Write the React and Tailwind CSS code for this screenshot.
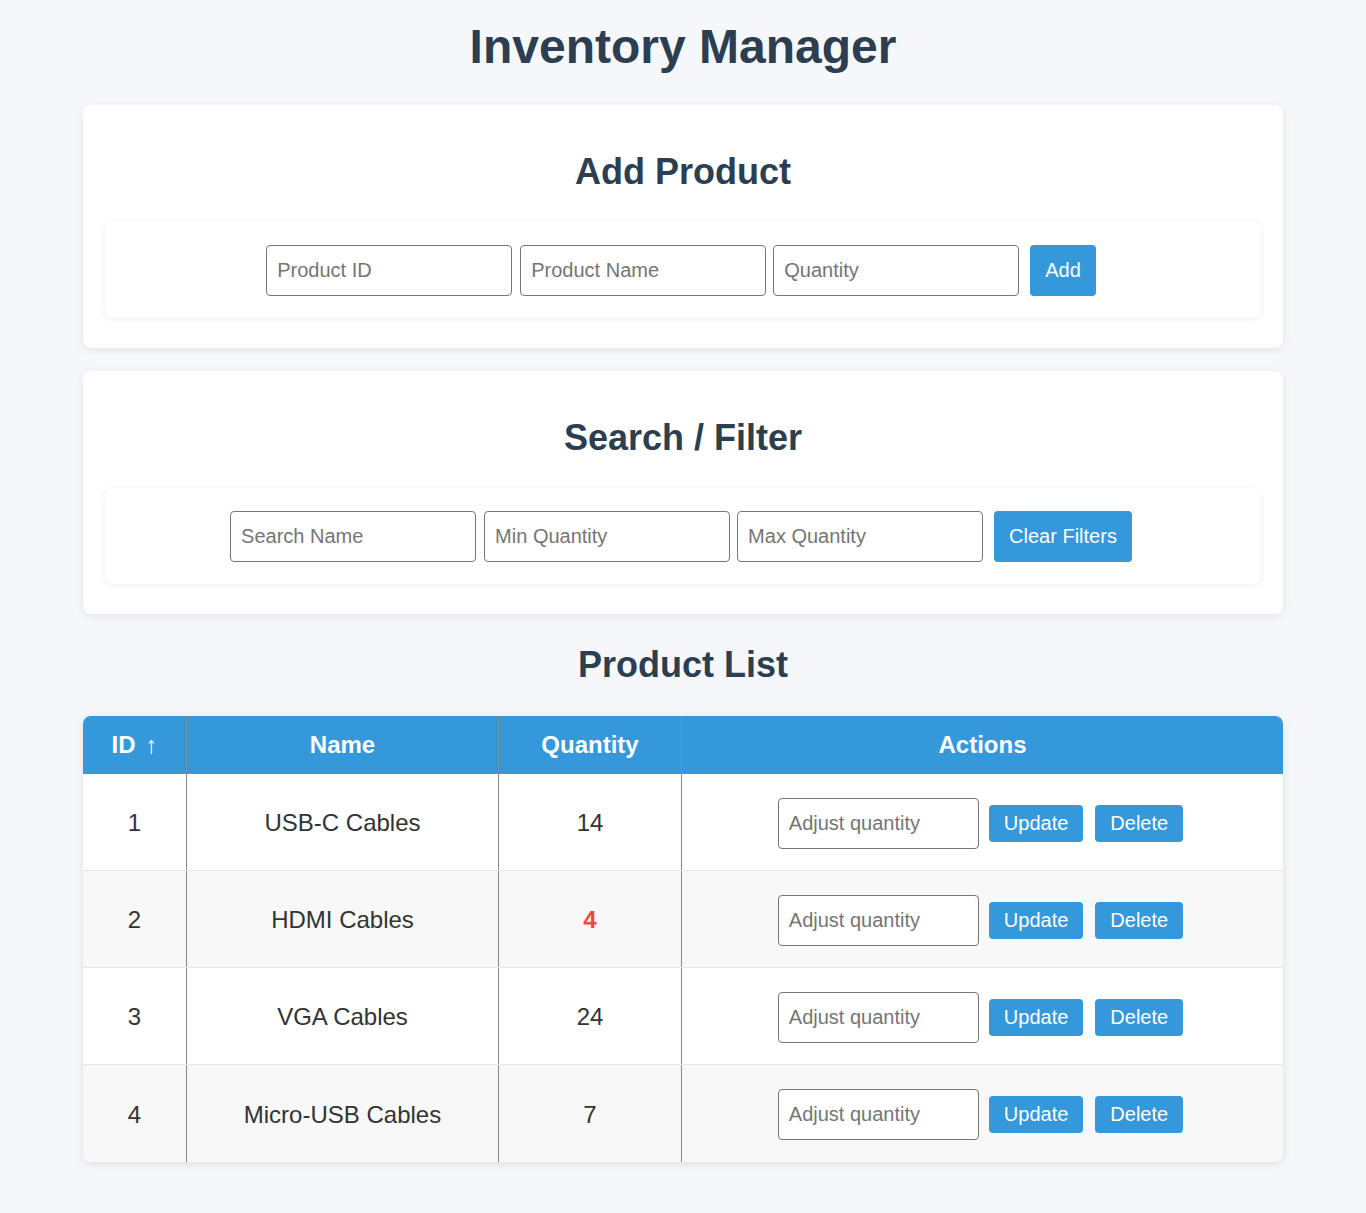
import React, { useState } from 'react';

const initialProducts = [
  { id: 1, name: 'USB-C Cables', quantity: 14 },
  { id: 2, name: 'HDMI Cables', quantity: 4 },
  { id: 3, name: 'VGA Cables', quantity: 24 },
  { id: 4, name: 'Micro-USB Cables', quantity: 7 },
];

// 通用输入框样式
const inputClass =
  'h-[51px] px-[10px] border border-[#767676] rounded-[4px] bg-white text-[20px] text-[#333] placeholder:text-[#757575] outline-none';

// 通用蓝色按钮
function BlueButton({ children, className = '', onClick }) {
  return (
    <button
      type="button"
      onClick={onClick}
      className={`px-[15px] rounded-[4px] bg-[#3498db] text-white text-[20px] leading-[23px] cursor-pointer ${className}`}
    >
      {children}
    </button>
  );
}

function Section({ title, children }) {
  return (
    <div className="bg-white rounded-[8px] shadow-[0_2px_8px_rgba(0,0,0,0.08)] px-[22px] pt-[46px] pb-[30px]">
      <h2 className="text-center text-[36px] leading-[41px] font-bold text-[#2c3e50] mb-[30px]">{title}</h2>
      <div className="bg-white rounded-[8px] shadow-[0_1px_6px_rgba(0,0,0,0.08)] pt-[23px] pb-[22px] pr-[4px] flex justify-center items-stretch">
        {children}
      </div>
    </div>
  );
}

export default function App() {
  const [products] = useState(initialProducts);

  return (
    <div
      className="min-h-[1213px] bg-[#f5f7fa] pt-[19px] pb-[50px]"
      style={{ fontFamily: '"Liberation Sans", Arial, sans-serif' }}
    >
      <div className="w-[1200px] mx-auto">
        <h1 className="text-center text-[48px] leading-[55px] font-bold text-[#2c3e50] mb-[31px]">
          Inventory Manager
        </h1>

        {/* 添加商品 */}
        <Section title="Add Product">
          <input className={`${inputClass} w-[246px]`} placeholder="Product ID" />
          <input className={`${inputClass} w-[246px] ml-[8px]`} placeholder="Product Name" />
          <input className={`${inputClass} w-[246px] ml-[7px]`} placeholder="Quantity" />
          <BlueButton className="ml-[11px]">Add</BlueButton>
        </Section>

        <div className="h-[23px]" />

        {/* 搜索 / 过滤 */}
        <Section title="Search / Filter">
          <input className={`${inputClass} w-[246px]`} placeholder="Search Name" />
          <input className={`${inputClass} w-[246px] ml-[8px]`} placeholder="Min Quantity" />
          <input className={`${inputClass} w-[246px] ml-[7px]`} placeholder="Max Quantity" />
          <BlueButton className="ml-[11px]">Clear Filters</BlueButton>
        </Section>

        <h2 className="text-center text-[36px] leading-[41px] font-bold text-[#2c3e50] mt-[30px] mb-[31px]">
          Product List
        </h2>

        {/* 商品表格 */}
        <div className="rounded-[8px] overflow-hidden shadow-[0_2px_8px_rgba(0,0,0,0.1)] bg-white">
          <div className="grid grid-cols-[104px_312px_183px_601px] bg-[#3498db] text-white text-[24px] font-bold h-[58px]">
            <div className="border-r border-[#7f8c8d] flex items-center justify-center">
              ID <span className="ml-[10px] font-normal">↑</span>
            </div>
            <div className="border-r border-[#7f8c8d] flex items-center justify-center">Name</div>
            <div className="border-r border-[#7f8c8d] flex items-center justify-center">Quantity</div>
            <div className="flex items-center justify-center">Actions</div>
          </div>

          {products.map((p, index) => (
            <div
              key={p.id}
              className={`grid grid-cols-[104px_312px_183px_601px] h-[97px] text-[24px] text-[#333] ${
                index < products.length - 1 ? 'border-b border-[#e5e5e5]' : ''
              } ${index % 2 === 1 ? 'bg-[#f8f8f8]' : 'bg-white'}`}
            >
              <div className="border-r border-[#888] flex items-center justify-center pt-[2px]">{p.id}</div>
              <div className="border-r border-[#888] flex items-center justify-center pt-[2px]">{p.name}</div>
              <div
                className={`border-r border-[#888] flex items-center justify-center pt-[2px] ${
                  p.quantity < 5 ? 'text-[#e74c3c] font-bold' : ''
                }`}
              >
                {p.quantity}
              </div>
              <div className="flex items-center justify-center pr-[4px] pt-[2px]">
                <input className={`${inputClass} w-[201px]`} placeholder="Adjust quantity" />
                <BlueButton className="h-[37px] ml-[10px]">Update</BlueButton>
                <BlueButton className="h-[37px] ml-[12px]">Delete</BlueButton>
              </div>
            </div>
          ))}
        </div>
      </div>
    </div>
  );
}
